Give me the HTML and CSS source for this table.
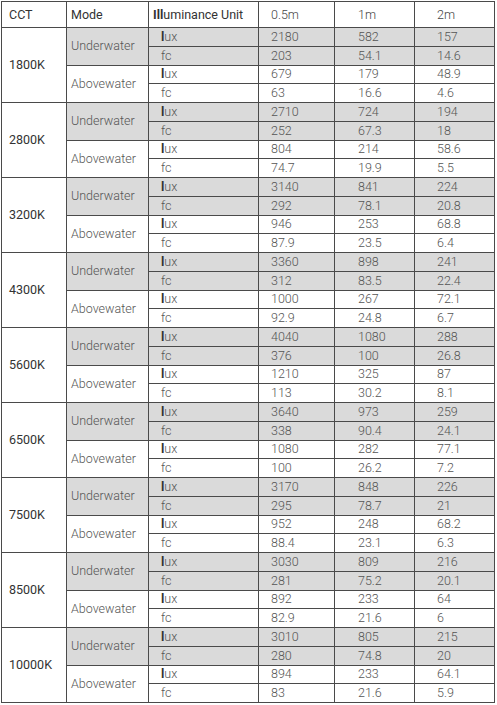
FILE: index.html
```html
<!DOCTYPE html>
<html>
<head>
<meta charset="utf-8">
<link rel="stylesheet" href="styles.css">
</head>
<body>
<table class="lux-table">
<colgroup>
<col class="c-cct"><col class="c-mode"><col class="c-unit"><col class="c-v1"><col class="c-v2"><col class="c-v3">
</colgroup>
<thead>
<tr class="head"><th class="cct">CCT</th><th class="mode">Mode</th><th class="unit"><span class="b">Ill</span>uminance Unit</th><th class="v1 dist">0.5m</th><th class="v2 dist">1m</th><th class="v3 dist">2m</th></tr>
</thead>
<tbody>
<tr class="u"><td class="cct" rowspan="4">1800K</td><td class="mode" rowspan="2">Underwater</td><td class="unit"><span class="b">l</span>ux</td><td class="v1">2180</td><td class="v2">582</td><td class="v3">157</td></tr>
<tr class="u"><td class="unit">fc</td><td class="v1">203</td><td class="v2">54.1</td><td class="v3">14.6</td></tr>
<tr><td class="mode" rowspan="2">Abovewater</td><td class="unit"><span class="b">l</span>ux</td><td class="v1">679</td><td class="v2">179</td><td class="v3">48.9</td></tr>
<tr><td class="unit">fc</td><td class="v1">63</td><td class="v2">16.6</td><td class="v3">4.6</td></tr>

<tr class="u"><td class="cct" rowspan="4">2800K</td><td class="mode" rowspan="2">Underwater</td><td class="unit"><span class="b">l</span>ux</td><td class="v1">2710</td><td class="v2">724</td><td class="v3">194</td></tr>
<tr class="u"><td class="unit">fc</td><td class="v1">252</td><td class="v2">67.3</td><td class="v3">18</td></tr>
<tr><td class="mode" rowspan="2">Abovewater</td><td class="unit"><span class="b">l</span>ux</td><td class="v1">804</td><td class="v2">214</td><td class="v3">58.6</td></tr>
<tr><td class="unit">fc</td><td class="v1">74.7</td><td class="v2">19.9</td><td class="v3">5.5</td></tr>

<tr class="u"><td class="cct" rowspan="4">3200K</td><td class="mode" rowspan="2">Underwater</td><td class="unit"><span class="b">l</span>ux</td><td class="v1">3140</td><td class="v2">841</td><td class="v3">224</td></tr>
<tr class="u"><td class="unit">fc</td><td class="v1">292</td><td class="v2">78.1</td><td class="v3">20.8</td></tr>
<tr><td class="mode" rowspan="2">Abovewater</td><td class="unit"><span class="b">l</span>ux</td><td class="v1">946</td><td class="v2">253</td><td class="v3">68.8</td></tr>
<tr><td class="unit">fc</td><td class="v1">87.9</td><td class="v2">23.5</td><td class="v3">6.4</td></tr>

<tr class="u"><td class="cct" rowspan="4">4300K</td><td class="mode" rowspan="2">Underwater</td><td class="unit"><span class="b">l</span>ux</td><td class="v1">3360</td><td class="v2">898</td><td class="v3">241</td></tr>
<tr class="u"><td class="unit">fc</td><td class="v1">312</td><td class="v2">83.5</td><td class="v3">22.4</td></tr>
<tr><td class="mode" rowspan="2">Abovewater</td><td class="unit"><span class="b">l</span>ux</td><td class="v1">1000</td><td class="v2">267</td><td class="v3">72.1</td></tr>
<tr><td class="unit">fc</td><td class="v1">92.9</td><td class="v2">24.8</td><td class="v3">6.7</td></tr>

<tr class="u"><td class="cct" rowspan="4">5600K</td><td class="mode" rowspan="2">Underwater</td><td class="unit"><span class="b">l</span>ux</td><td class="v1">4040</td><td class="v2">1080</td><td class="v3">288</td></tr>
<tr class="u"><td class="unit">fc</td><td class="v1">376</td><td class="v2">100</td><td class="v3">26.8</td></tr>
<tr><td class="mode" rowspan="2">Abovewater</td><td class="unit"><span class="b">l</span>ux</td><td class="v1">1210</td><td class="v2">325</td><td class="v3">87</td></tr>
<tr><td class="unit">fc</td><td class="v1">113</td><td class="v2">30.2</td><td class="v3">8.1</td></tr>

<tr class="u"><td class="cct" rowspan="4">6500K</td><td class="mode" rowspan="2">Underwater</td><td class="unit"><span class="b">l</span>ux</td><td class="v1">3640</td><td class="v2">973</td><td class="v3">259</td></tr>
<tr class="u"><td class="unit">fc</td><td class="v1">338</td><td class="v2">90.4</td><td class="v3">24.1</td></tr>
<tr><td class="mode" rowspan="2">Abovewater</td><td class="unit"><span class="b">l</span>ux</td><td class="v1">1080</td><td class="v2">282</td><td class="v3">77.1</td></tr>
<tr><td class="unit">fc</td><td class="v1">100</td><td class="v2">26.2</td><td class="v3">7.2</td></tr>

<tr class="u"><td class="cct" rowspan="4">7500K</td><td class="mode" rowspan="2">Underwater</td><td class="unit"><span class="b">l</span>ux</td><td class="v1">3170</td><td class="v2">848</td><td class="v3">226</td></tr>
<tr class="u"><td class="unit">fc</td><td class="v1">295</td><td class="v2">78.7</td><td class="v3">21</td></tr>
<tr><td class="mode" rowspan="2">Abovewater</td><td class="unit"><span class="b">l</span>ux</td><td class="v1">952</td><td class="v2">248</td><td class="v3">68.2</td></tr>
<tr><td class="unit">fc</td><td class="v1">88.4</td><td class="v2">23.1</td><td class="v3">6.3</td></tr>

<tr class="u"><td class="cct" rowspan="4">8500K</td><td class="mode" rowspan="2">Underwater</td><td class="unit"><span class="b">l</span>ux</td><td class="v1">3030</td><td class="v2">809</td><td class="v3">216</td></tr>
<tr class="u"><td class="unit">fc</td><td class="v1">281</td><td class="v2">75.2</td><td class="v3">20.1</td></tr>
<tr><td class="mode" rowspan="2">Abovewater</td><td class="unit"><span class="b">l</span>ux</td><td class="v1">892</td><td class="v2">233</td><td class="v3">64</td></tr>
<tr><td class="unit">fc</td><td class="v1">82.9</td><td class="v2">21.6</td><td class="v3">6</td></tr>

<tr class="u"><td class="cct" rowspan="4">10000K</td><td class="mode" rowspan="2">Underwater</td><td class="unit"><span class="b">l</span>ux</td><td class="v1">3010</td><td class="v2">805</td><td class="v3">215</td></tr>
<tr class="u"><td class="unit">fc</td><td class="v1">280</td><td class="v2">74.8</td><td class="v3">20</td></tr>
<tr><td class="mode" rowspan="2">Abovewater</td><td class="unit"><span class="b">l</span>ux</td><td class="v1">894</td><td class="v2">233</td><td class="v3">64.1</td></tr>
<tr><td class="unit">fc</td><td class="v1">83</td><td class="v2">21.6</td><td class="v3">5.9</td></tr>
</tbody>
</table>
</body>
</html>
```
FILE: styles.css
```css
html, body {
  margin: 0;
  padding: 0;
  background: #ffffff;
}
body {
  padding: 1px 0 0 1px;
  font-family: Roboto, "Liberation Sans", sans-serif;
  font-size: 12.5px;
  font-weight: 300;
  color: #555;
}
.lux-table {
  border-collapse: collapse;
  table-layout: fixed;
  width: 493px;
}
.c-cct { width: 65px; }
.c-mode { width: 82px; }
.c-unit { width: 110px; }
.c-v1 { width: 76px; }
.c-v2 { width: 80px; }
.c-v3 { width: 80px; }
.lux-table th,
.lux-table td {
  border: 1px solid #4a4a4a;
  padding: 0;
  text-align: left;
  vertical-align: middle;
  white-space: nowrap;
  line-height: 14px;
}
.lux-table th {
  font-weight: 400;
  height: 25px;
  color: #333;
}
.lux-table th.dist {
  font-weight: 300;
  color: #444;
}
.lux-table td {
  height: 17.75px;
}
.cct { padding-left: 7px !important; color: #333; font-weight: 400; }
.mode { padding-left: 4px !important; }
.unit { padding-left: 12px !important; }
.v1 { padding-left: 12px !important; }
.v2 { padding-left: 23px !important; }
.v3 { padding-left: 22px !important; }
th.unit { padding-left: 4px !important; }
.lux-table td.cct { background: #fff; }
.u td { background: #dadada; }
.u td.cct { background: #fff; }
.b {
  font-weight: 700;
  color: #333;
}
```
